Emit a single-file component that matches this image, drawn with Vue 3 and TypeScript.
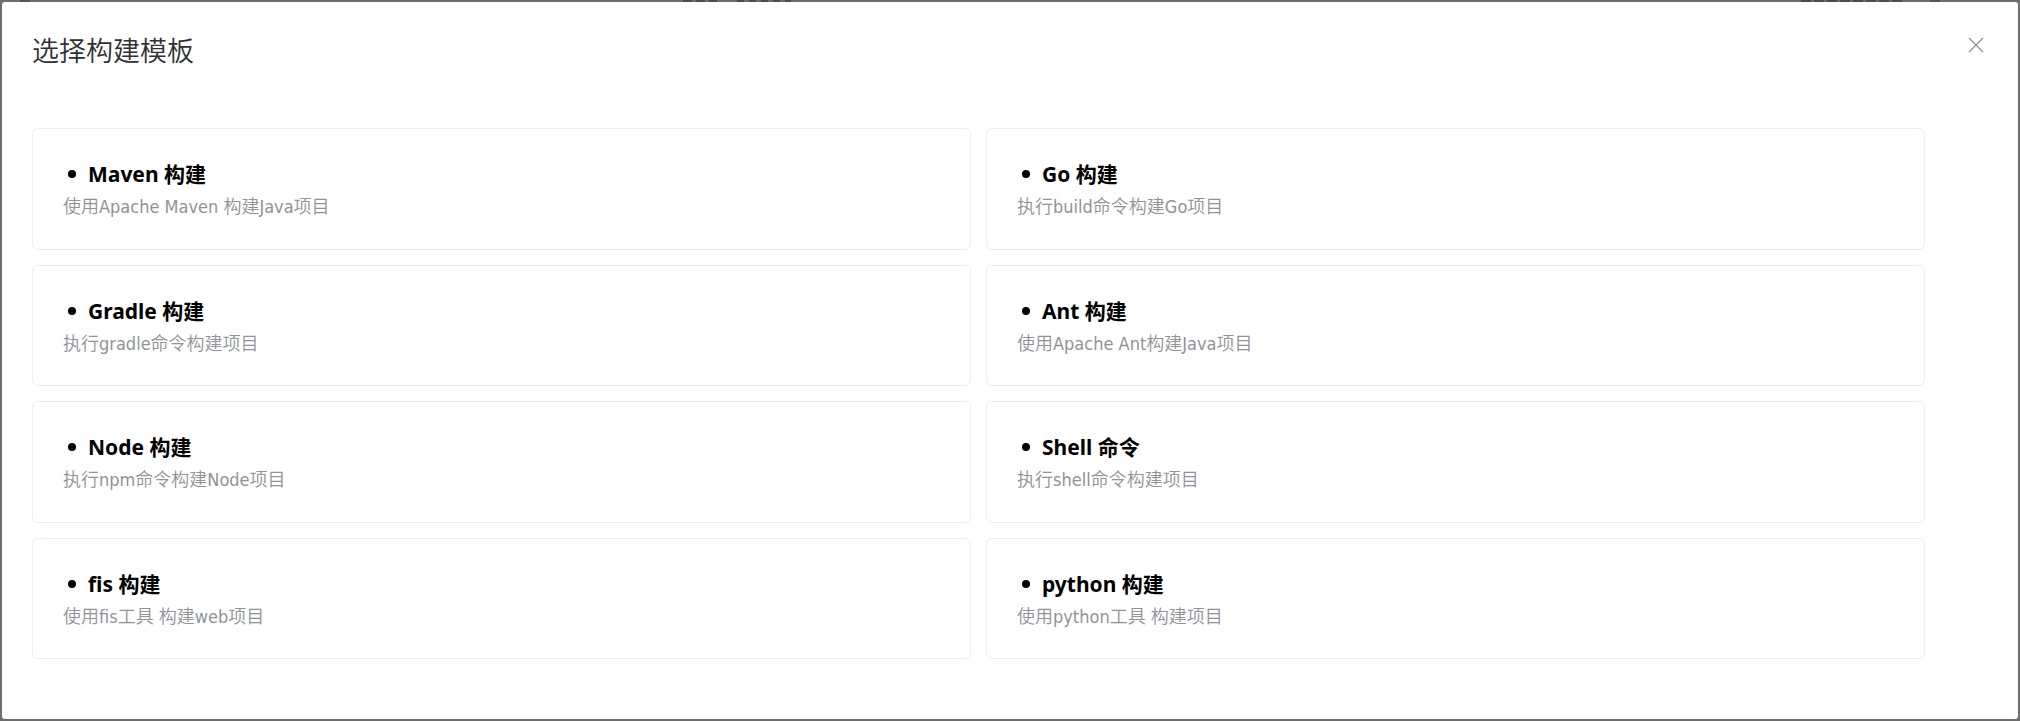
<script setup lang="ts">
interface BuildTemplate {
  name: string
  description: string
}

const templates: BuildTemplate[] = [
  { name: 'Maven 构建', description: '使用Apache Maven 构建Java项目' },
  { name: 'Go 构建', description: '执行build命令构建Go项目' },
  { name: 'Gradle 构建', description: '执行gradle命令构建项目' },
  { name: 'Ant 构建', description: '使用Apache Ant构建Java项目' },
  { name: 'Node 构建', description: '执行npm命令构建Node项目' },
  { name: 'Shell 命令', description: '执行shell命令构建项目' },
  { name: 'fis 构建', description: '使用fis工具 构建web项目' },
  { name: 'python 构建', description: '使用python工具 构建项目' },
]
</script>

<template>
  <div class="overlay">
    <section class="dialog" role="dialog" aria-modal="true" aria-labelledby="dialog-title">
      <header class="dialog-header">
        <h2 id="dialog-title" class="dialog-title">选择构建模板</h2>
        <button class="close" type="button" aria-label="关闭">
          <svg class="close-icon" viewBox="0 0 16 16" aria-hidden="true">
            <path d="M1 1 15 15M15 1 1 15" />
          </svg>
        </button>
      </header>
      <ul class="templates">
        <li v-for="item in templates" :key="item.name" class="card">
          <h3 class="card-title">{{ item.name }}</h3>
          <p class="card-text">{{ item.description }}</p>
        </li>
      </ul>
    </section>
  </div>
</template>

<style>
body {
  margin: 0;
}
</style>

<style scoped>
/* The gradients are the dimmed page content showing along the top edge. */
.overlay {
  display: flex;
  box-sizing: border-box;
  min-height: 100vh;
  padding: 2px;
  background:
    linear-gradient(#54535a, #54535a) 1% 0 / 10px 2px no-repeat,
    repeating-linear-gradient(90deg, #4c4c50 0 9px, #6d6c6d 9px 13px) 34.4% 0 / 34px 2px no-repeat,
    repeating-linear-gradient(90deg, #4c4c50 0 7px, #6d6c6d 7px 12px) 37.5% 0 / 54px 2px no-repeat,
    repeating-linear-gradient(90deg, #4c4c50 0 10px, #6d6c6d 10px 13px) 94% 0 / 104px 2px no-repeat,
    linear-gradient(#54535a, #54535a) 96% 0 / 10px 2px no-repeat,
    #6e6e6e;
  font-family: "Noto Sans", "Noto Sans CJK SC", sans-serif;
}

.dialog {
  display: flex;
  flex: 1;
  flex-direction: column;
  border-radius: 3px;
  background: #fff;
}

.dialog-header {
  display: flex;
  align-items: flex-start;
  justify-content: space-between;
  padding: 31px 34px 0 30px;
}

.dialog-title {
  margin: 0;
  color: #303133;
  font-size: 27px;
  font-weight: 350;
  line-height: 36px;
}

.close {
  display: flex;
  padding: 4px 0;
  border: 0;
  background: none;
  cursor: pointer;
}

.close-icon {
  width: 16px;
  height: 16px;
  fill: none;
  stroke: #909399;
  stroke-width: 1.4;
}

.templates {
  display: grid;
  flex: 1;
  grid-template-columns: 1fr 1fr;
  grid-auto-rows: 1fr;
  gap: 15px;
  margin: 0;
  padding: 59px 93px 60px 30px;
  list-style: none;
}

.card {
  padding: 29px 30px 24px;
  border: 1px solid #ebeef5;
  border-radius: 6px;
}

.card-title {
  display: flex;
  align-items: center;
  margin: 0;
  color: #000;
  font-size: 21px;
  font-weight: 700;
  line-height: 32px;
}

.card-title::before {
  width: 8px;
  height: 8px;
  margin: 0 12px 0 5px;
  border-radius: 50%;
  background: currentColor;
  content: "";
}

.card-text {
  margin: 0;
  color: #909399;
  font-family: "DejaVu Sans Condensed", "Noto Sans CJK SC", sans-serif;
  font-size: 18px;
  font-weight: 350;
  line-height: 34px;
}
</style>
